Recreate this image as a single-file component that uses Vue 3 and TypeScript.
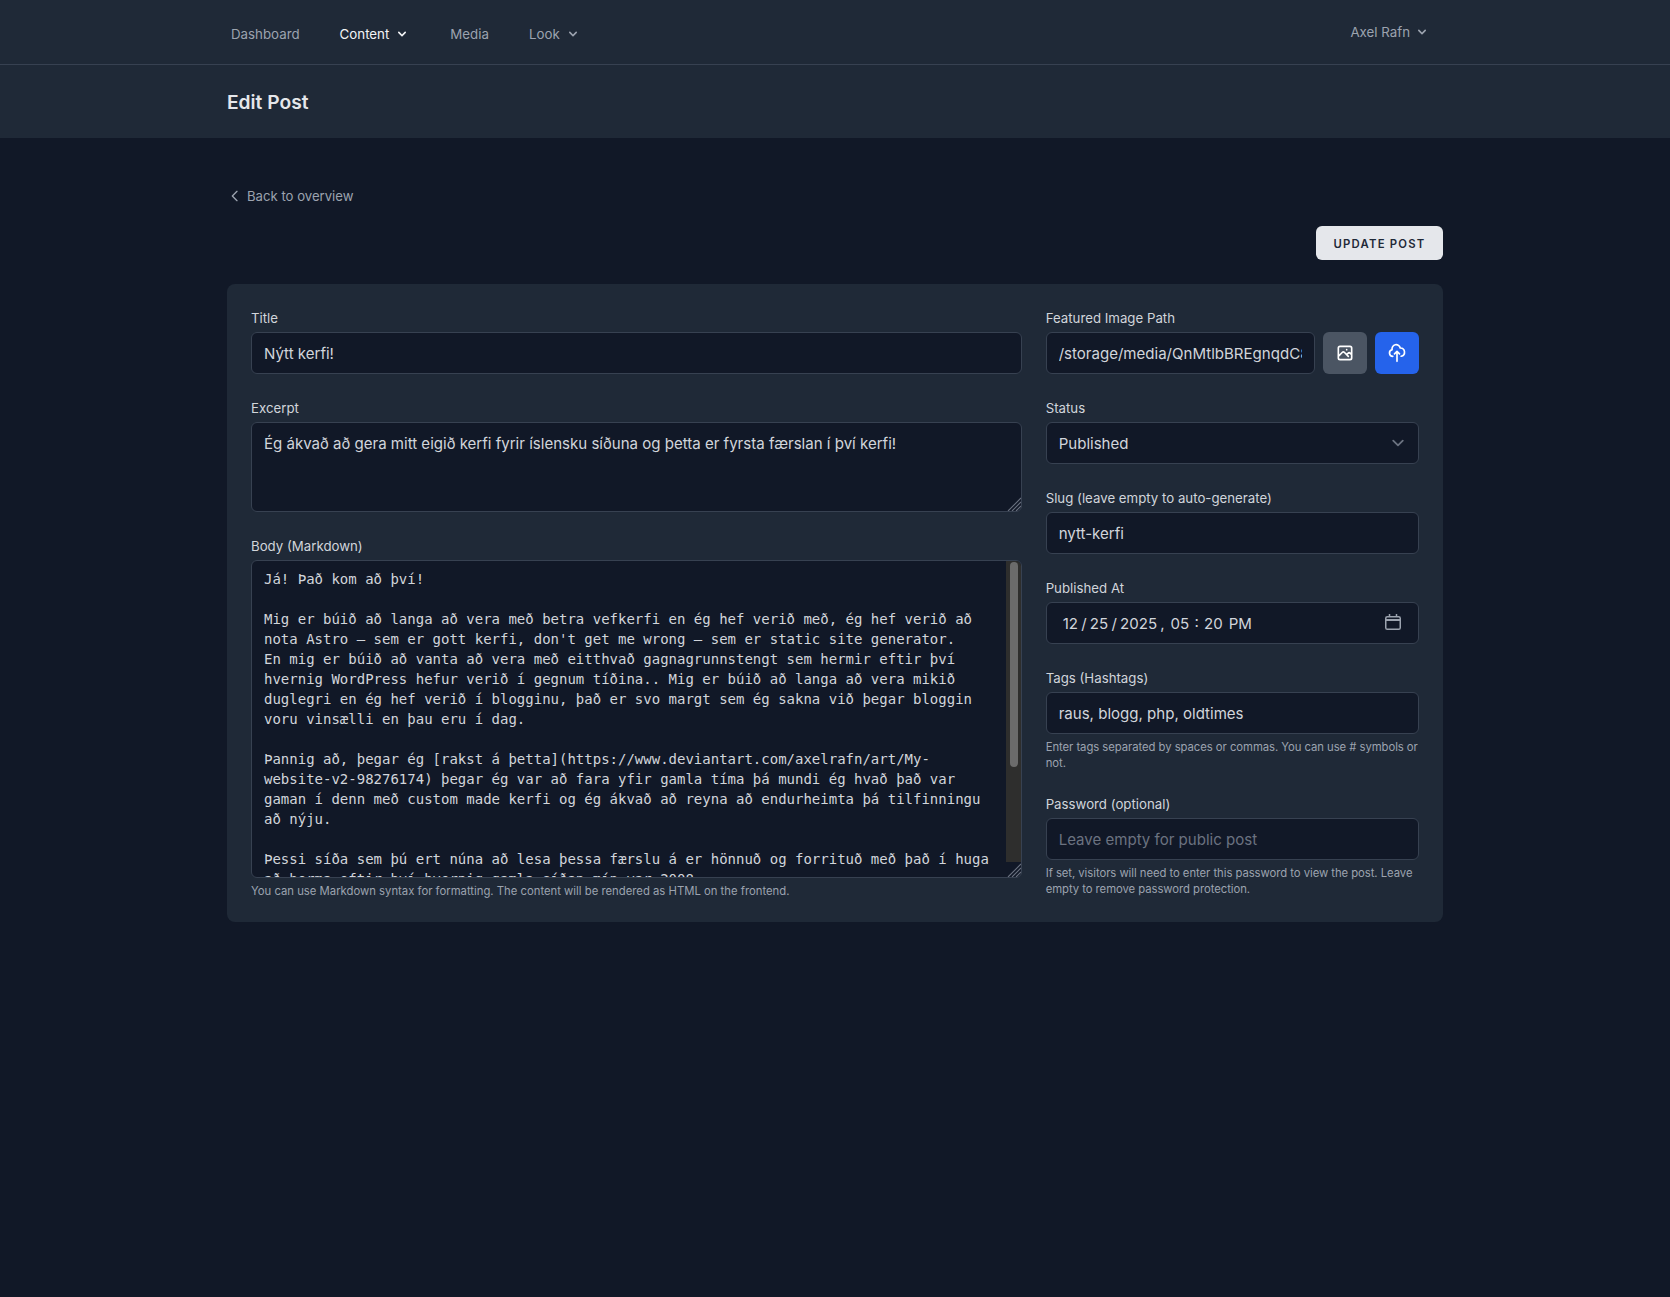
<script setup lang="ts">
const navItems = [
  { label: 'Dashboard', active: false, caret: false },
  { label: 'Content', active: true, caret: true },
  { label: 'Media', active: false, caret: false },
  { label: 'Look', active: false, caret: true },
]
const excerpt = 'Ég ákvað að gera mitt eigið kerfi fyrir íslensku síðuna og þetta er fyrsta færslan í því kerfi!'
const body = `Já! Það kom að því!

Mig er búið að langa að vera með betra vefkerfi en ég hef verið með, ég hef verið að nota Astro – sem er gott kerfi, don't get me wrong – sem er static site generator.
En mig er búið að vanta að vera með eitthvað gagnagrunnstengt sem hermir eftir því hvernig WordPress hefur verið í gegnum tíðina.. Mig er búið að langa að vera mikið duglegri en ég hef verið í blogginu, það er svo margt sem ég sakna við þegar bloggin voru vinsælli en þau eru í dag.

Þannig að, þegar ég [rakst á þetta](https://www.deviantart.com/axelrafn/art/My-website-v2-98276174) þegar ég var að fara yfir gamla tíma þá mundi ég hvað það var gaman í denn með custom made kerfi og ég ákvað að reyna að endurheimta þá tilfinningu að nýju.

Þessi síða sem þú ert núna að lesa þessa færslu á er hönnuð og forrituð með það í huga að herma eftir því hvernig gamla síðan mín var 2008.`
</script>

<template>
  <div class="page">
    <nav class="nav">
      <div class="nav-inner">
        <div class="links">
          <a v-for="item in navItems" :key="item.label" class="link" :class="{ active: item.active }">
            {{ item.label }}
            <svg v-if="item.caret" class="caret" viewBox="0 0 20 20" fill="currentColor"><path fill-rule="evenodd" clip-rule="evenodd" d="M5.293 7.293a1 1 0 011.414 0L10 10.586l3.293-3.293a1 1 0 111.414 1.414l-4 4a1 1 0 01-1.414 0l-4-4a1 1 0 010-1.414z"/></svg>
          </a>
        </div>
        <div class="user">
          Axel Rafn
          <svg class="caret" viewBox="0 0 20 20" fill="currentColor"><path fill-rule="evenodd" clip-rule="evenodd" d="M5.293 7.293a1 1 0 011.414 0L10 10.586l3.293-3.293a1 1 0 111.414 1.414l-4 4a1 1 0 01-1.414 0l-4-4a1 1 0 010-1.414z"/></svg>
        </div>
      </div>
    </nav>
    <header class="header">
      <h1>Edit Post</h1>
    </header>
    <main class="main">
      <a class="back">
        <svg viewBox="0 0 24 24" fill="none" stroke="currentColor" stroke-width="2" stroke-linecap="round" stroke-linejoin="round"><path d="M15 19l-7-7 7-7"/></svg>
        Back to overview
      </a>
      <div class="actions"><button class="update">Update Post</button></div>
      <section class="card">
        <div class="col">
          <div class="field">
            <label>Title</label>
            <input class="control" type="text" value="Nýtt kerfi!" />
          </div>
          <div class="field">
            <label>Excerpt</label>
            <div class="area-wrap">
              <textarea class="control area" rows="3" :value="excerpt"></textarea>
              <svg class="grip" viewBox="0 0 14 14" fill="none" stroke="#6b7280" stroke-width="1.1"><path d="M14 1L1 14M14 5L5 14M14 9L9 14"/></svg>
            </div>
          </div>
          <div class="field">
            <label>Body (Markdown)</label>
            <div class="area-wrap">
              <textarea class="control area mono" rows="15" :value="body"></textarea>
              <div class="scrollbar" aria-hidden="true"><div class="thumb"></div></div>
              <svg class="grip" viewBox="0 0 14 14" fill="none" stroke="#6b7280" stroke-width="1.1"><path d="M14 1L1 14M14 5L5 14M14 9L9 14"/></svg>
            </div>
            <p class="help">You can use Markdown syntax for formatting. The content will be rendered as HTML on the frontend.</p>
          </div>
        </div>
        <div class="col">
          <div class="field">
            <label>Featured Image Path</label>
            <div class="image-row">
              <input class="control" type="text" value="/storage/media/QnMtlbBREgnqdC8xYvTz0aK2.png" />
              <button class="square gray" aria-label="Browse media">
                <svg viewBox="0 0 24 24" fill="none" stroke="currentColor" stroke-width="2" stroke-linecap="round" stroke-linejoin="round"><path d="M4 16l4.586-4.586a2 2 0 012.828 0L16 16m-2-2l1.586-1.586a2 2 0 012.828 0L20 14m-6-6h.01M6 20h12a2 2 0 002-2V6a2 2 0 00-2-2H6a2 2 0 00-2 2v12a2 2 0 002 2z"/></svg>
              </button>
              <button class="square blue" aria-label="Upload image">
                <svg viewBox="0 0 24 24" fill="none" stroke="currentColor" stroke-width="2" stroke-linecap="round" stroke-linejoin="round"><path d="M7 16a4 4 0 01-.88-7.903A5 5 0 1115.9 6L16 6a5 5 0 011 9.9M15 13l-3-3m0 0l-3 3m3-3v12"/></svg>
              </button>
            </div>
          </div>
          <div class="field">
            <label>Status</label>
            <select class="control select">
              <option>Published</option>
              <option>Draft</option>
            </select>
          </div>
          <div class="field">
            <label>Slug (leave empty to auto-generate)</label>
            <input class="control" type="text" value="nytt-kerfi" />
          </div>
          <div class="field">
            <label>Published At</label>
            <div class="control date">
              <span class="date-text">
                <span class="date-part">12 / 25 / 2025 ,</span>
                <span class="time-part">05 : 20</span>
                <span>PM</span>
              </span>
              <svg viewBox="0 0 16 16" fill="none" stroke="currentColor" stroke-width="1.5"><rect x="0.75" y="2.75" width="14.5" height="12.5" rx="1.6"/><path d="M1 6h14" stroke-width="2"/><path d="M4.5 0v3M11.5 0v3"/></svg>
            </div>
          </div>
          <div class="field">
            <label>Tags (Hashtags)</label>
            <input class="control" type="text" value="raus, blogg, php, oldtimes" />
            <p class="help tight">Enter tags separated by spaces or commas. You can use # symbols or not.</p>
          </div>
          <div class="field">
            <label>Password (optional)</label>
            <input class="control" type="password" placeholder="Leave empty for public post" />
            <p class="help tight">If set, visitors will need to enter this password to view the post. Leave empty to remove password protection.</p>
          </div>
        </div>
      </section>
    </main>
  </div>
</template>

<style>
html, body { background: #111827; color-scheme: dark; }
</style>

<style scoped>
.page {
  min-height: 1297px;
  background: #111827;
  font-family: "Inter", "Liberation Sans", sans-serif;
  color: #d1d5db;
}
.nav { background: #1f2937; border-bottom: 1px solid #374151; height: 65px; box-sizing: border-box; }
.nav-inner {
  width: 1280px; margin: 0 auto; padding: 0 32px; box-sizing: border-box;
  display: flex; justify-content: space-between; height: 64px;
}
.links { display: flex; align-items: center; gap: 40px; padding-left: 4px; padding-top: 4px; }
.link { display: inline-flex; align-items: center; gap: 5px; font-size: 13.3px; line-height: 20px; color: #9ca3af; }
.link.active { color: #f3f4f6; }
.user { display: flex; align-items: center; gap: 4px; font-size: 13.3px; color: #9ca3af; height: 64px; padding-right: 13px; }
.caret { width: 16px; height: 16px; }
.header { background: #1f2937; height: 73px; }
.header h1 {
  width: 1280px; margin: 0 auto; padding: 2px 32px 0; box-sizing: border-box;
  font-size: 19.2px; line-height: 71px; font-weight: 600; color: #e5e7eb;
}
.main { width: 1280px; margin: 0 auto; padding: 48px 32px; box-sizing: border-box; }
.back { display: flex; align-items: center; gap: 4px; font-size: 13.15px; line-height: 20px; color: #9ca3af; }
.back svg { width: 16px; height: 16px; }
.actions { display: flex; justify-content: flex-end; margin-top: 20px; margin-bottom: 24px; }
.update {
  width: 127px; height: 34px; padding: 2px 0 0; border: 0; border-radius: 6px; background: #e5e7eb; color: #1f2937;
  font: 600 11.3px/16px "Inter", sans-serif; letter-spacing: .11em; text-transform: uppercase;
}
.card {
  background: #1f2937; border-radius: 8px; padding: 24px;
  display: grid; gap: 24px;
  grid-template-columns: 770.67px 373.33px;
  box-sizing: border-box;
}
.col { display: flex; flex-direction: column; gap: 24px; min-width: 0; }
label { display: block; font-size: 13.25px; line-height: 20px; font-weight: 430; color: #d1d5db; margin-bottom: 4px; }
.control {
  display: block; width: 100%; box-sizing: border-box; height: 42px;
  background: #111827; color: #d1d5db; border: 1px solid #374151; border-radius: 6px;
  padding: 8px 12px; font: 400 15.05px/24px "Inter", sans-serif; outline: none; margin: 0;
}
.control::placeholder { color: #6b7280; }
.area-wrap { position: relative; }
.area { height: auto; resize: none; overflow: hidden; padding-top: 9px; padding-bottom: 7px; }
.mono { font: 400 14px/20px "DejaVu Sans Mono", monospace; padding: 8px 28px 8px 12px; }
.grip { position: absolute; right: 1px; bottom: 1px; width: 14px; height: 14px; }
.scrollbar {
  position: absolute; top: 1px; right: 1px; bottom: 16px; width: 15px;
  background: #2e2e2d; border-top-right-radius: 5px;
}
.thumb { width: 8px; height: 205px; margin: 1px 0 0 4px; border-radius: 4px; background: #6b6b6b; }
.image-row { display: flex; gap: 8px; }
.image-row .control { flex: 1; min-width: 0; }
.square {
  width: 44px; height: 42px; flex: none; border: 0; border-radius: 6px; color: #fff;
  display: flex; align-items: center; justify-content: center; padding: 0;
}
.square svg { width: 20px; height: 20px; }
.gray { background: #4b5563; }
.blue { background: #2563eb; }
.select {
  appearance: none; padding-top: 8px; padding-bottom: 8px; line-height: 26px;
  background-image: url("data:image/svg+xml,%3csvg xmlns='http://www.w3.org/2000/svg' fill='none' viewBox='0 0 20 20'%3e%3cpath stroke='%236b7280' stroke-linecap='round' stroke-linejoin='round' stroke-width='1.5' d='M6 8l4 4 4-4'/%3e%3c/svg%3e");
  background-position: right 8px center; background-repeat: no-repeat; background-size: 24px 24px;
}
.date { display: flex; align-items: center; justify-content: space-between; padding: 8px 17px 8px 16px; }
.date-text { display: flex; gap: 6px; white-space: pre; padding-top: 1px; }
.date-part { word-spacing: -1px; }
.time-part { word-spacing: 1px; }
.date svg { width: 16px; height: 16px; color: #9ca3af; margin-top: -2px; }
.help { margin: 5px 0 -1px; font-size: 11.3px; line-height: 16px; color: #9ca3af; }
.tight { letter-spacing: -.05px; }
</style>
